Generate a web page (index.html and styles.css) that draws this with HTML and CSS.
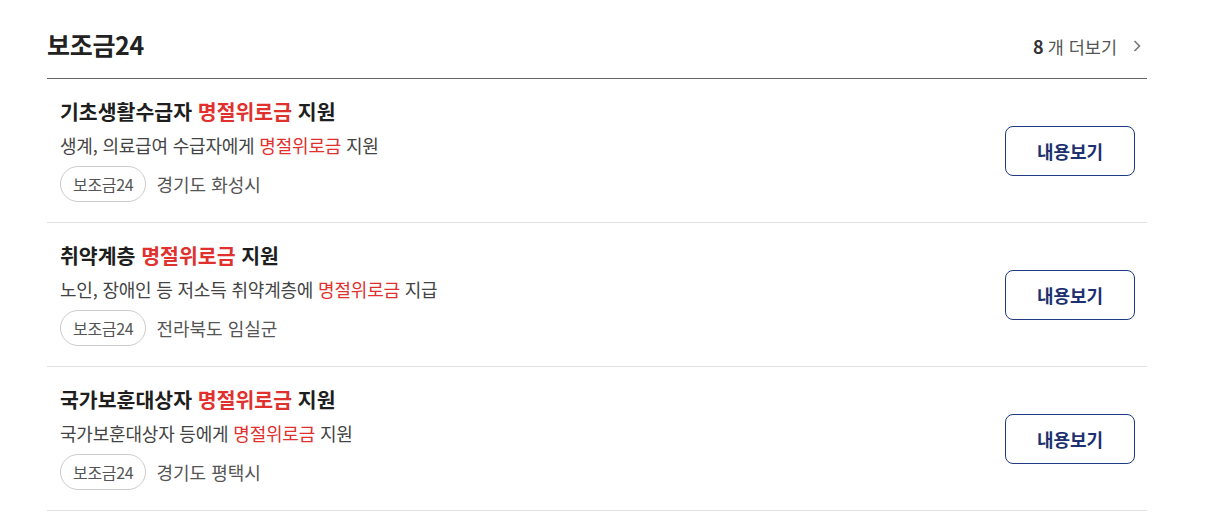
FILE: index.html
```html
<!DOCTYPE html>
<html lang="ko">

<head>
  <meta charset="UTF-8">
  <meta name="viewport" content="width=device-width, initial-scale=1.0">
  <title>보조금24</title>
  <link rel="stylesheet" href="styles.css">
</head>

<body>
  <div class="container">
    <div class="header">
      <h2>보조금24</h2>
      <a class="more" href="#"><b>8</b> 개 더보기
        <svg width="10" height="14" viewBox="0 0 10 14"><path d="M2.5 2l5 5-5 5" fill="none" stroke="#777" stroke-width="1.6"/></svg>
      </a>
    </div>

    <div class="item">
      <div class="info">
        <h4>기초생활수급자 <span class="red">명절위로금</span> 지원</h4>
        <p>생계, 의료급여 수급자에게 <span class="red">명절위로금</span> 지원</p>
        <div class="meta">
          <span class="tag">보조금24</span>
          <span class="place">경기도 화성시</span>
        </div>
      </div>
      <button>내용보기</button>
    </div>

    <div class="item">
      <div class="info">
        <h4>취약계층 <span class="red">명절위로금</span> 지원</h4>
        <p>노인, 장애인 등 저소득 취약계층에 <span class="red">명절위로금</span> 지급</p>
        <div class="meta">
          <span class="tag">보조금24</span>
          <span class="place">전라북도 임실군</span>
        </div>
      </div>
      <button>내용보기</button>
    </div>

    <div class="item">
      <div class="info">
        <h4>국가보훈대상자 <span class="red">명절위로금</span> 지원</h4>
        <p>국가보훈대상자 등에게 <span class="red">명절위로금</span> 지원</p>
        <div class="meta">
          <span class="tag">보조금24</span>
          <span class="place">경기도 평택시</span>
        </div>
      </div>
      <button>내용보기</button>
    </div>
  </div>
</body>

</html>
```

FILE: styles.css
```css
body {
  font-family: "Noto Sans CJK KR", "Noto Sans", sans-serif;
  margin: 0;
  background-color: #ffffff;
  color: #222;
}

.container {
  width: 1100px;
  margin-left: 47px;
}

.header {
  display: flex;
  justify-content: space-between;
  align-items: center;
  height: 78px;
  border-bottom: 1px solid #666;
}

.header h2 {
  margin: 10px 0 0 0;
  font-size: 25px;
  font-weight: bold;
  color: #222;
  letter-spacing: -0.3px;
}

.more {
  display: flex;
  align-items: center;
  gap: 4px;
  margin-top: 14px;
  margin-right: 5px;
  font-size: 17.5px;
  color: #555;
  text-decoration: none;
}

.more b {
  color: #333;
  font-size: 18px;
}

.more svg {
  margin-left: 11px;
}

.item {
  display: flex;
  justify-content: space-between;
  align-items: center;
  padding: 17px 12px 20px 13px;
  border-bottom: 1px solid #e2e2e2;
}

.item h4 {
  margin: 0;
  font-size: 20.5px;
  line-height: 30px;
  font-weight: bold;
  color: #1e1e1e;
}

.item p {
  margin: 5px 0 0 0;
  font-size: 18px;
  line-height: 28px;
  color: #444;
  letter-spacing: -0.2px;
}

.red {
  color: #e0312f;
}

.meta {
  display: flex;
  align-items: center;
  gap: 10px;
  margin-top: 7px;
}

.tag {
  display: inline-block;
  box-sizing: border-box;
  height: 36px;
  line-height: 34px;
  padding: 0 12px;
  border: 1px solid #ccc;
  border-radius: 18px;
  font-size: 16px;
  color: #555;
  letter-spacing: -0.3px;
}

.place {
  font-size: 18px;
  color: #555;
}

button {
  width: 130px;
  height: 50px;
  margin-top: 3px;
  border: 1px solid #1d3a82;
  border-radius: 8px;
  background-color: #ffffff;
  color: #1d3170;
  font-family: inherit;
  font-size: 18px;
  font-weight: bold;
  cursor: pointer;
}
```
